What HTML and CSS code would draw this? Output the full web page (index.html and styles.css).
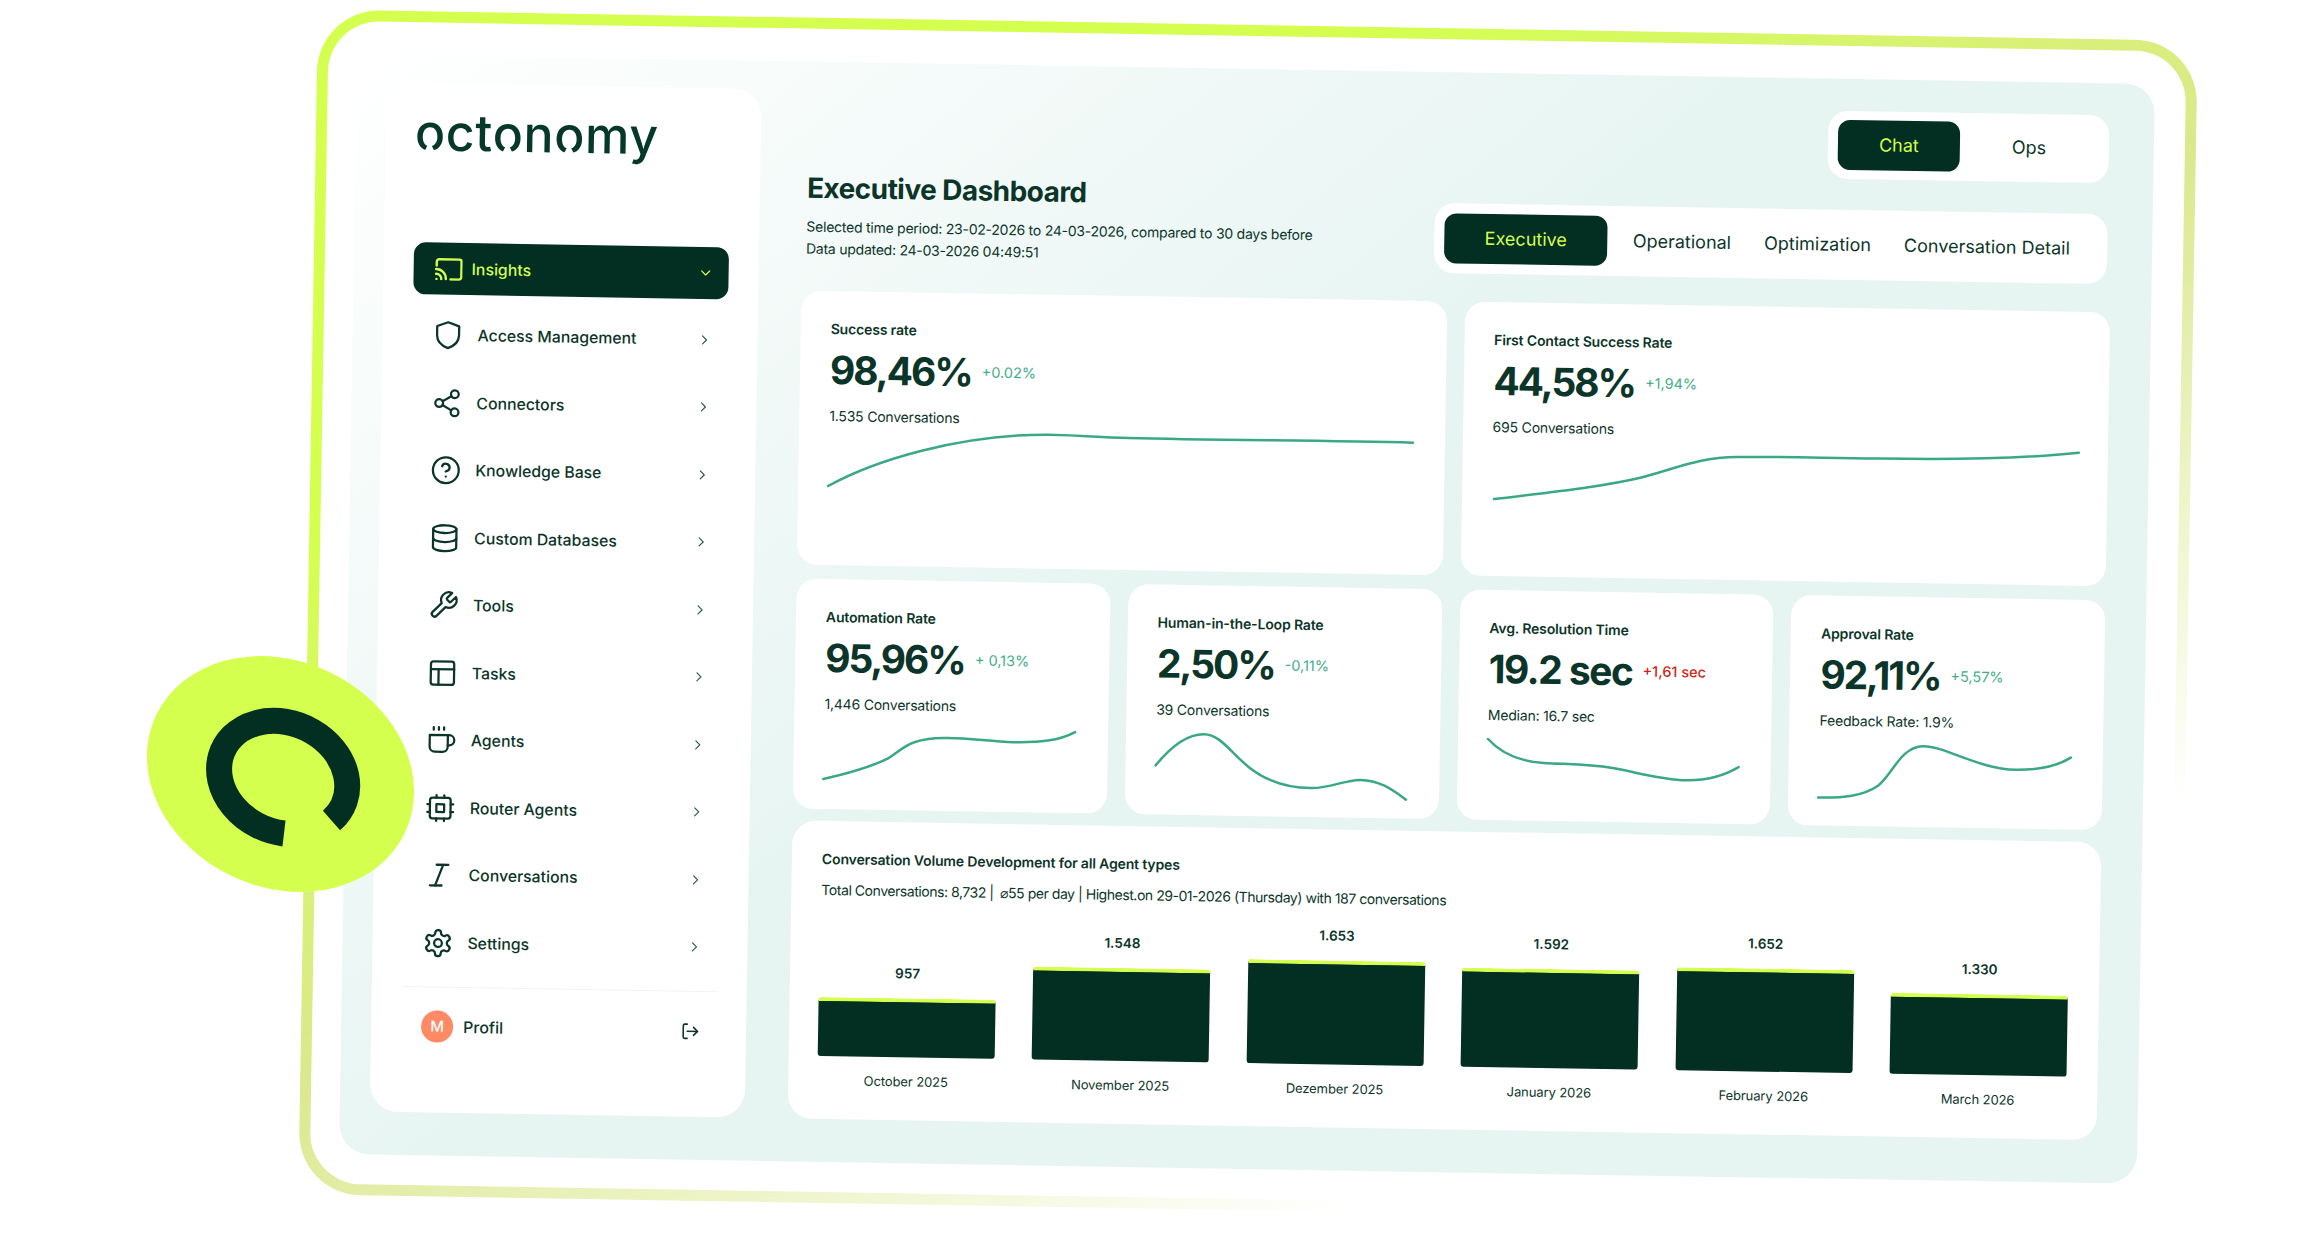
FILE: index.html
```html
<!DOCTYPE html>
<html>
<head>
  <title>octonomy Executive Dashboard</title>
  <link rel="stylesheet" href="styles.css">
</head>
<body>
  <svg width="0" height="0" class="defs">
    <symbol id="chev" viewBox="0 0 12 12"><path d="M4 2l4 4-4 4" fill="none" stroke="currentColor" stroke-width="1.2" stroke-linecap="round" stroke-linejoin="round"/></symbol>
  </svg>

  <div class="frame">
    <div class="frame-inner">
      <div class="panel">

        <!-- Sidebar -->
        <aside class="sidebar">
          <div class="logo"><span class="logo-o">o</span>ct<span class="logo-o">o</span>n<span class="logo-o">o</span>my</div>

          <div class="nav-item active">
            <svg class="nav-icon cast" viewBox="0 0 28 23"><path d="M2 8V4.200a2.500 2.500 0 0 1 2.500-2.500h20.300a2 2 0 0 1 2 2v15.600a2.500 2.500 0 0 1-2.500 2.500H16"/><path d="M1.500 11.500a9.600 9.600 0 0 1 9.800 10"/><path d="M1.500 16.200a5 5 0 0 1 5.200 5.300"/><path d="M2 21.400h.01"/></svg>
            <span>Insights</span>
            <svg class="chev down"><use href="#chev"/></svg>
          </div>

          <div class="nav-item">
            <svg class="nav-icon" viewBox="0 0 24 24"><path d="M12 2l8.500 3v7c0 5-3.600 8.200-8.500 10-4.900-1.800-8.500-5-8.500-10V5z"/></svg>
            <span>Access Management</span>
            <svg class="chev"><use href="#chev"/></svg>
          </div>
          <div class="nav-item">
            <svg class="nav-icon" viewBox="0 0 24 24"><circle cx="18" cy="5" r="3"/><circle cx="6" cy="12" r="3"/><circle cx="18" cy="19" r="3"/><path d="M8.590 13.510l6.830 3.980"/><path d="M15.410 6.510l-6.820 3.980"/></svg>
            <span>Connectors</span>
            <svg class="chev"><use href="#chev"/></svg>
          </div>
          <div class="nav-item">
            <svg class="nav-icon" viewBox="0 0 24 24"><circle cx="12" cy="12" r="10"/><path d="M9.090 9a3 3 0 0 1 5.830 1c0 2-3 3-3 3"/><path d="M12 17h.01"/></svg>
            <span>Knowledge Base</span>
            <svg class="chev"><use href="#chev"/></svg>
          </div>
          <div class="nav-item">
            <svg class="nav-icon" viewBox="0 0 24 24"><ellipse cx="12" cy="5" rx="9" ry="3"/><path d="M3 5v14a9 3 0 0 0 18 0V5"/><path d="M3 12a9 3 0 0 0 18 0"/></svg>
            <span>Custom Databases</span>
            <svg class="chev"><use href="#chev"/></svg>
          </div>
          <div class="nav-item">
            <svg class="nav-icon" viewBox="0 0 24 24"><path d="M14.700 6.300a1 1 0 0 0 0 1.400l1.600 1.600a1 1 0 0 0 1.400 0l3.770-3.770a6 6 0 0 1-7.940 7.940l-6.910 6.910a2.120 2.120 0 0 1-3-3l6.910-6.910a6 6 0 0 1 7.940-7.940l-3.760 3.760z"/></svg>
            <span>Tools</span>
            <svg class="chev"><use href="#chev"/></svg>
          </div>
          <div class="nav-item">
            <svg class="nav-icon" viewBox="0 0 24 24"><rect x="3" y="3" width="18" height="18" rx="2"/><path d="M3 9h18"/><path d="M9 21V9"/></svg>
            <span>Tasks</span>
            <svg class="chev"><use href="#chev"/></svg>
          </div>
          <div class="nav-item">
            <svg class="nav-icon" viewBox="0 0 24 24"><path d="M17 8h1a4 4 0 1 1 0 8h-1"/><path d="M3 8h14v9a4 4 0 0 1-4 4H7a4 4 0 0 1-4-4z"/><path d="M6 2v2"/><path d="M10 2v2"/><path d="M14 2v2"/></svg>
            <span>Agents</span>
            <svg class="chev"><use href="#chev"/></svg>
          </div>
          <div class="nav-item">
            <svg class="nav-icon" viewBox="0 0 24 24"><rect x="4" y="4" width="16" height="16" rx="2"/><rect x="9" y="9" width="6" height="6"/><path d="M15 2v2M15 20v2M2 15h2M2 9h2M20 15h2M20 9h2M9 2v2M9 20v2"/></svg>
            <span>Router Agents</span>
            <svg class="chev"><use href="#chev"/></svg>
          </div>
          <div class="nav-item">
            <svg class="nav-icon" viewBox="0 0 24 24"><path d="M19 4h-9"/><path d="M14 20H5"/><path d="M15 4L9 20"/></svg>
            <span>Conversations</span>
            <svg class="chev"><use href="#chev"/></svg>
          </div>
          <div class="nav-item">
            <svg class="nav-icon" viewBox="0 0 24 24"><path d="M12.220 2h-.44a2 2 0 0 0-2 2v.18a2 2 0 0 1-1 1.730l-.43.25a2 2 0 0 1-2 0l-.15-.08a2 2 0 0 0-2.730.73l-.22.38a2 2 0 0 0 .73 2.730l.15.1a2 2 0 0 1 1 1.720v.51a2 2 0 0 1-1 1.740l-.15.09a2 2 0 0 0-.73 2.730l.22.38a2 2 0 0 0 2.730.73l.15-.08a2 2 0 0 1 2 0l.43.25a2 2 0 0 1 1 1.730V20a2 2 0 0 0 2 2h.44a2 2 0 0 0 2-2v-.18a2 2 0 0 1 1-1.730l.43-.25a2 2 0 0 1 2 0l.15.08a2 2 0 0 0 2.730-.73l.22-.39a2 2 0 0 0-.73-2.730l-.15-.08a2 2 0 0 1-1-1.740v-.5a2 2 0 0 1 1-1.740l.15-.09a2 2 0 0 0 .73-2.730l-.22-.38a2 2 0 0 0-2.730-.73l-.15.08a2 2 0 0 1-2 0l-.43-.25a2 2 0 0 1-1-1.730V4a2 2 0 0 0-2-2z"/><circle cx="12" cy="12" r="3"/></svg>
            <span>Settings</span>
            <svg class="chev"><use href="#chev"/></svg>
          </div>

          <div class="profile">
            <div class="avatar">M</div>
            <span>Profil</span>
            <svg class="logout" viewBox="0 0 24 24"><path d="M9 3H6a2 2 0 0 0-2 2v14a2 2 0 0 0 2 2h3"/><path d="M9 12h13"/><path d="M17 7l5 5-5 5"/></svg>
          </div>
        </aside>

        <!-- Main -->
        <main class="main">
          <header class="header">
            <div class="title-block">
              <h1>Executive Dashboard</h1>
              <p>Selected time period: 23-02-2026 to 24-03-2026, compared to 30 days before</p>
              <p>Data updated: 24-03-2026 04:49:51</p>
            </div>
            <div class="header-tabs">
              <div class="tabs tabs-mode">
                <div class="tab active">Chat</div>
                <div class="tab">Ops</div>
              </div>
              <div class="tabs tabs-view">
                <div class="tab active">Executive</div>
                <div class="tab">Operational</div>
                <div class="tab">Optimization</div>
                <div class="tab">Conversation Detail</div>
              </div>
            </div>
          </header>

          <section class="row-top">
            <div class="card">
              <div class="card-label">Success rate</div>
              <div class="card-value"><strong>98,46%</strong><span class="delta">+0.02%</span></div>
              <div class="card-sub">1.535 Conversations</div>
              <svg class="spark" width="590" height="80"><path d="M0 66C45 40 130 12 219 11C260 11 265 13 300 13C380 14 500 12 584 13"/></svg>
            </div>
            <div class="card">
              <div class="card-label">First Contact Success Rate</div>
              <div class="card-value"><strong>44,58%</strong><span class="delta">+1,94%</span></div>
              <div class="card-sub">695 Conversations</div>
              <svg class="spark" width="590" height="80"><path d="M2 68C60 60 110 54 149 44C185 34 205 23 245 22C300 20 340 22 388 21C450 21 520 20 586 12"/></svg>
            </div>
          </section>

          <section class="row-kpi">
            <div class="card">
              <div class="card-label">Automation Rate</div>
              <div class="card-value"><strong>95,96%</strong><span class="delta">+ 0,13%</span></div>
              <div class="card-sub">1,446 Conversations</div>
              <svg class="spark" width="255" height="85"><path d="M0 70C25 64 48 57 65 48C80 38 85 28 120 27C145 26 165 30 190 30C215 30 235 28 251 19"/></svg>
            </div>
            <div class="card">
              <div class="card-label">Human-in-the-Loop Rate</div>
              <div class="card-value"><strong>2,50%</strong><span class="delta">-0,11%</span></div>
              <div class="card-sub">39 Conversations</div>
              <svg class="spark" width="255" height="85"><path d="M0 51C15 32 32 19 48 19C70 19 80 50 116 64C130 70 145 71 156 71C175 71 190 62 205 62C225 62 238 72 251 81"/></svg>
            </div>
            <div class="card">
              <div class="card-label">Avg. Resolution Time</div>
              <div class="card-value"><strong class="wide">19.2 sec</strong><span class="delta bad">+1,61 sec</span></div>
              <div class="card-sub">Median: 16.7 sec</div>
              <svg class="spark" width="255" height="85"><path d="M0 19C14 34 32 41 56 42C80 43 100 42 125 46C150 50 175 57 199 57C220 57 238 51 251 43"/></svg>
            </div>
            <div class="card">
              <div class="card-label">Approval Rate</div>
              <div class="card-value"><strong>92,11%</strong><span class="delta">+5,57%</span></div>
              <div class="card-sub">Feedback Rate: 1.9%</div>
              <svg class="spark" width="255" height="85"><path d="M0 72C25 72 45 70 60 59C75 46 82 20 104 19C125 18 160 41 197 41C220 41 238 37 252 28"/></svg>
            </div>
          </section>

          <section class="card card-volume">
            <div class="card-label">Conversation Volume Development for all Agent types</div>
            <div class="volume-sub">Total Conversations: 8,732 | &nbsp;⌀55 per day | Highest.on 29-01-2026 (Thursday) with 187 conversations</div>
            <div class="bars">
              <div class="bar-col"><div class="bar-value">957</div><div class="bar" style="height: 59px"></div><div class="bar-month">October 2025</div></div>
              <div class="bar-col"><div class="bar-value">1.548</div><div class="bar" style="height: 93px"></div><div class="bar-month">November 2025</div></div>
              <div class="bar-col"><div class="bar-value">1.653</div><div class="bar" style="height: 104px"></div><div class="bar-month">Dezember 2025</div></div>
              <div class="bar-col"><div class="bar-value">1.592</div><div class="bar" style="height: 99px"></div><div class="bar-month">January 2026</div></div>
              <div class="bar-col"><div class="bar-value">1.652</div><div class="bar" style="height: 103px"></div><div class="bar-month">February 2026</div></div>
              <div class="bar-col"><div class="bar-value">1.330</div><div class="bar" style="height: 81px"></div><div class="bar-month">March 2026</div></div>
            </div>
          </section>
        </main>
      </div>
    </div>
  </div>

  <!-- Round logo badge over the frame -->
  <svg class="badge" width="268" height="238" viewBox="147 656 268 238">
    <ellipse cx="280.500" cy="774" rx="137.600" ry="113.200" transform="rotate(25 280.500 774)" fill="#d4ff4f"/>
    <path d="M284 833.500A66 54.300 25 1 1 331.500 820.500" fill="none" stroke="#032e22" stroke-width="26"/>
  </svg>
</body>
</html>
```

FILE: styles.css
```css
html, body {
  margin: 0;
  background: #fff;
}

body {
  position: relative;
  width: 2300px;
  height: 1248px;
  overflow: hidden;
  font-family: Inter, "Liberation Sans", sans-serif;
  color: #0c3529;
}

.defs {
  display: none;
}

/* Tilted device frame */
.frame {
  width: 1880px;
  height: 1185px;
  margin: 25px 0 0 308px;
  padding: 11px;
  box-sizing: border-box;
  border-radius: 62px;
  background: linear-gradient(153deg, #d4ff4f 25%, #dbe88e 50%, #fff 80%);
  transform: rotate(0.95deg);
}

.frame-inner {
  height: 100%;
  box-sizing: border-box;
  padding: 33px 31px 30px 29px;
  border-radius: 51px;
  background: #fff;
}

.panel {
  display: flex;
  gap: 43px;
  height: 100%;
  box-sizing: border-box;
  padding: 28px 41px 43px 30px;
  border-radius: 30px;
  background: linear-gradient(140deg, #fff 0%, #e7f5f2 45%);
}

/* Sidebar */
.sidebar {
  flex: 0 0 375px;
  box-sizing: border-box;
  padding: 0 30px;
  border-radius: 28px;
  background: #fff;
}

.logo {
  height: 159px;
  padding-top: 19px;
  margin-left: -1px;
  box-sizing: border-box;
  font-size: 50px;
  font-weight: 500;
  line-height: 60px;
  letter-spacing: 0.600px;
  color: #06382a;
}

.logo-o {
  position: relative;
  display: inline-block;
}

.logo-o::after {
  content: "";
  position: absolute;
  left: calc(50% - 6px);
  bottom: 10px;
  width: 11px;
  height: 11px;
  background: #fff;
  clip-path: polygon(50% 0, 100% 100%, 0 100%);
}

.nav-item {
  display: flex;
  align-items: center;
  gap: 14.500px;
  height: 67.500px;
  padding: 0 17px 0 19.500px;
  font-size: 15.800px;
  font-weight: 500;
}

.nav-item > span {
  flex: 1;
}

.nav-item.active {
  gap: 9px;
  height: 52px;
  margin-bottom: 7px;
  padding-left: 21px;
  border-radius: 12px;
  background: #032e22;
  color: #d4ff4f;
}

.nav-icon {
  flex: none;
  width: 31px;
  height: 31px;
  fill: none;
  stroke: currentColor;
  stroke-width: 1.750;
  stroke-linecap: round;
  stroke-linejoin: round;
}

.nav-icon.cast {
  width: 28px;
  height: 23px;
  stroke-width: 2.400;
}

.chev {
  flex: none;
  width: 12px;
  height: 12px;
  color: #2c5b4c;
}

.chev.down {
  transform: rotate(90deg);
  color: #d4ff4f;
}

.profile {
  display: flex;
  align-items: center;
  gap: 10px;
  margin-top: 10px;
  padding: 23px 17px 0 20px;
  border-top: 1px solid #f0f5f3;
  font-size: 16px;
  font-weight: 500;
}

.profile > span {
  flex: 1;
}

.avatar {
  width: 32px;
  height: 32px;
  border-radius: 50%;
  background: #ff8a65;
  color: #fff;
  font-size: 15px;
  line-height: 32px;
  text-align: center;
}

.logout {
  width: 19px;
  height: 19px;
  fill: none;
  stroke: currentColor;
  stroke-width: 2;
  stroke-linecap: round;
  stroke-linejoin: round;
}

/* Main column */
.main {
  flex: 1;
  min-width: 0;
}

.header {
  display: flex;
  justify-content: space-between;
  padding: 4px 4px 0 4px;
}

.title-block {
  align-self: flex-end;
  padding-bottom: 3px;
}

.title-block h1 {
  margin: 0 0 11px;
  font-size: 28px;
  line-height: 34px;
  font-weight: 700;
  letter-spacing: -0.550px;
}

.title-block p {
  margin: 0;
  font-size: 14px;
  line-height: 22px;
  letter-spacing: -0.240px;
}

.header-tabs {
  display: flex;
  flex-direction: column;
  align-items: flex-end;
  gap: 31px;
}

.tabs {
  display: flex;
  align-items: center;
  box-sizing: border-box;
  border-radius: 20px;
  background: #fff;
  font-size: 18px;
}

.tabs-mode {
  gap: 8px;
  width: 281px;
  height: 68px;
  padding: 0 10px;
}

.tabs-mode .tab {
  width: 122px;
}

.tabs-view {
  width: 673px;
  height: 70px;
  padding: 0 10px;
}

.tabs-view .tab {
  padding: 0 16.500px;
}

.tabs-view .tab.active {
  width: 163px;
  padding: 0;
  margin-right: 9px;
}

.tab {
  height: 50px;
  line-height: 50px;
  text-align: center;
}

.tab.active {
  border-radius: 12px;
  background: #032e22;
  color: #d4ff4f;
}

.row-top {
  display: grid;
  grid-template-columns: minmax(0, 1fr) minmax(0, 1fr);
  gap: 18px;
  height: 274.500px;
  margin-top: 27.500px;
}

.row-kpi {
  display: grid;
  grid-template-columns: repeat(4, minmax(0, 1fr));
  gap: 18px;
  height: 230px;
  margin-top: 14px;
}

.card {
  box-sizing: border-box;
  padding: 29px 30px 0;
  border-radius: 20px;
  background: #fff;
}

.card-label {
  font-size: 14px;
  line-height: 18px;
  font-weight: 600;
  letter-spacing: -0.150px;
}

.card-value {
  display: flex;
  align-items: center;
  gap: 10px;
  margin-top: 8px;
  line-height: 48px;
}

.card-value strong {
  font-size: 39px;
  font-weight: 700;
  letter-spacing: -2.100px;
}

.card-value strong.wide {
  letter-spacing: -1.500px;
}

.delta {
  font-size: 14.500px;
  color: #3fae8a;
}

.delta.bad {
  color: #d01f17;
  font-weight: 500;
}

.card-sub {
  margin-top: 12px;
  font-size: 14px;
  line-height: 20px;
  letter-spacing: -0.200px;
}

.spark {
  display: block;
  margin-top: -5.500px;
  overflow: visible;
}

.spark path {
  fill: none;
  stroke: #3aa883;
  stroke-width: 2.500;
  stroke-linecap: round;
}

.card-volume {
  display: flex;
  flex-direction: column;
  height: 298px;
  margin-top: 12px;
  padding: 29px 31px 30px 30px;
  border-radius: 24px;
}

.volume-sub {
  margin-top: 13px;
  font-size: 14px;
  line-height: 18px;
  letter-spacing: -0.450px;
}

.bars {
  display: flex;
  justify-content: space-between;
  align-items: flex-end;
  margin: auto 0 0 -1px;
}

.bar-col {
  flex: 0 0 177px;
  text-align: center;
}

.bar-value {
  margin-bottom: 16.500px;
  font-size: 13.500px;
  line-height: 18px;
  font-weight: 600;
}

.bar {
  box-sizing: border-box;
  border-top: 4px solid #d4ff4f;
  border-radius: 3px;
  background: #032e22;
}

.bar-month {
  margin-top: 15px;
  font-size: 13px;
  line-height: 18px;
  letter-spacing: -0.100px;
}

/* Badge sits over the frame edge */
.badge {
  position: absolute;
  left: 147px;
  top: 656px;
}
```
